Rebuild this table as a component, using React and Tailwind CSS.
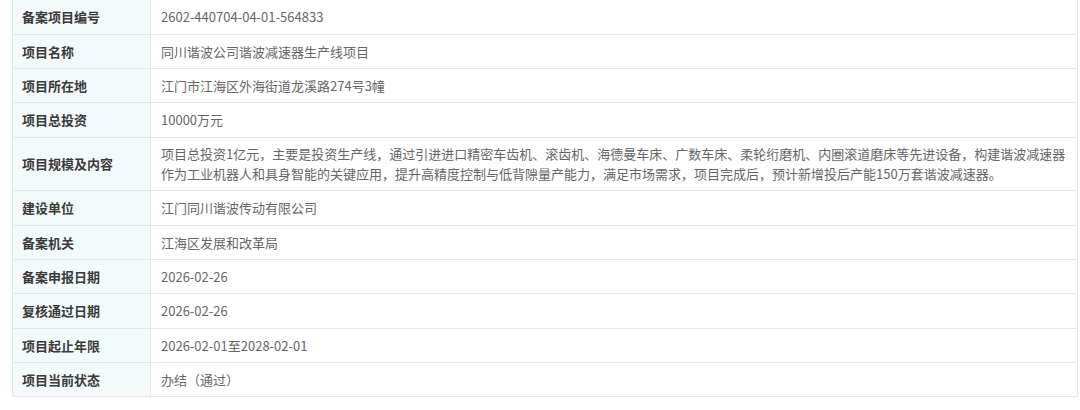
import React from 'react';

// project filing details: label, value, vertical padding of the row
const rows = [
  ['备案项目编号', '2602-440704-04-01-564833', 'py-[7px]'],
  ['项目名称', '同川谐波公司谐波减速器生产线项目', 'py-[6.5px]'],
  ['项目所在地', '江门市江海区外海街道龙溪路274号3幢', 'py-[6.5px]'],
  ['项目总投资', '10000万元', 'py-[7px]'],
  [
    '项目规模及内容',
    <>
      项目总投资1亿元，主要是投资生产线，通过引进进口精密车齿机、滚齿机、海德曼车床、广数车床、柔轮绗磨机、内圈滚道磨床等先进设备，构建谐波减速器
      <br />
      作为工业机器人和具身智能的关键应用，提升高精度控制与低背隙量产能力，满足市场需求，项目完成后，预计新增投后产能150万套谐波减速器。
    </>,
    'py-[6px]',
  ],
  ['建设单位', '江门同川谐波传动有限公司', 'py-[7px]'],
  ['备案机关', '江海区发展和改革局', 'py-[6.5px]'],
  ['备案申报日期', '2026-02-26', 'py-[6.5px]'],
  ['复核通过日期', '2026-02-26', 'py-[7px]'],
  ['项目起止年限', '2026-02-01至2028-02-01', 'py-[6.5px]'],
  ['项目当前状态', '办结（通过）', 'py-[6.5px]'],
];

function App() {
  return (
    <div
      className="w-[1080px] h-[410px] bg-white overflow-hidden pl-[12px] pr-[2px]"
      style={{ fontFamily: '"Microsoft YaHei", "Noto Sans CJK SC", "Noto Sans", sans-serif' }}
    >
      <table className="w-full border-collapse border-x border-b border-[#e4e6e8] text-[13px] leading-[20px]">
        <tbody>
          {rows.map(([label, value, pad], i) => (
            <tr key={i} className={i === 0 ? '' : 'border-t border-[#e4e6e8]'}>
              <td
                className={
                  'w-[138px] bg-[#f3fafb] border-r border-[#e4e6e8] pl-[9px] pr-2 align-middle font-bold text-[#3a3a3a] ' +
                  pad
                }
              >
                {label}
              </td>
              <td className={'pl-[10px] pr-[4px] text-[#666] whitespace-nowrap ' + pad}>{value}</td>
            </tr>
          ))}
        </tbody>
      </table>
    </div>
  );
}

export default App;
